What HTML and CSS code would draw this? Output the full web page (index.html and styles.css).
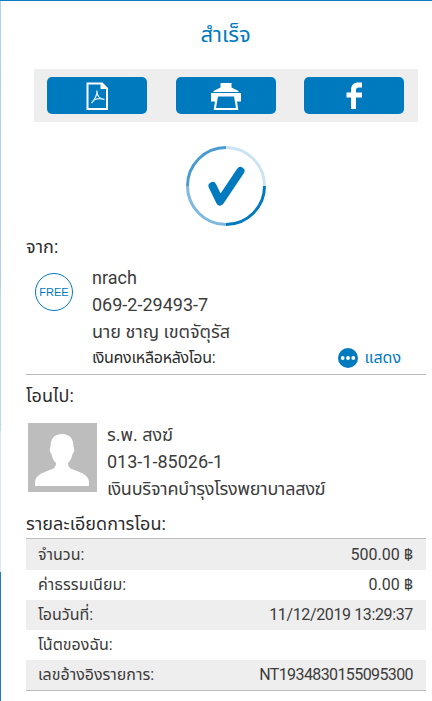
FILE: index.html
```
<!DOCTYPE html>
<html lang="th">
<head>
    <meta charset="UTF-8">
    <meta name="viewport" content="width=device-width, initial-scale=1.0">
    <title>สำเร็จ</title>
    <link rel="stylesheet" href="styles.css">
</head>
<body>
    <main class="page">
        <h1>สำเร็จ</h1>

        <div class="actions">
            <button class="btn" aria-label="PDF">
                <svg width="24" height="30" viewBox="0 0 24 30">
                    <path d="M1.500 1.500h16l5.500 5.500v22H1.500z" fill="#fff"/>
                    <path d="M3.500 3.500h12v4.500h5.500v19H3.500z" fill="#007abf"/>
                    <path d="M12 9.500c0 6-2 9-5.500 12.500M12 10c0 5 3 8 7.500 8.500M8 19.500c4-2.500 7-2.500 11-1" fill="none" stroke="#d5ebf8" stroke-width="1.300"/>
                </svg>
            </button>
            <button class="btn" aria-label="Print">
                <svg width="30" height="30" viewBox="0 0 30 30">
                    <path d="M9.500 2h11v4.500l7 3.500v1h-25v-1l7-3.500z" fill="#fff"/>
                    <path d="M0 12h30v8.500h-4l1.300 8.500H2.700L4 20.500H0z" fill="#fff"/>
                    <path d="M7 15.500h16l2 11.500H5z" fill="#007abf"/>
                </svg>
            </button>
            <button class="btn" aria-label="Facebook">
                <svg width="18" height="30" viewBox="0 0 18 30">
                    <path d="M6 28V16.500H1.500V11.500H6V9c0-5 3-7.500 7-7.500h4v5h-3c-2 0-3 1-3 2.500v2.500h6v5h-6V28z" fill="#fff"/>
                </svg>
            </button>
        </div>

        <svg class="done" width="80" height="80" viewBox="0 0 80 80" fill="none">
            <path d="M40 1.500A38.500 38.500 0 0 1 78.500 40" stroke="#cce3f3" stroke-width="3"/>
            <path d="M78.500 40A38.500 38.500 0 0 1 40 78.500" stroke="#007abf" stroke-width="3"/>
            <path d="M40 78.500A38.500 38.500 0 0 1 1.500 40" stroke="#80b9df" stroke-width="3"/>
            <path d="M1.500 40A38.500 38.500 0 0 1 40 1.500" stroke="#4a9bd0" stroke-width="3"/>
            <path d="M26.500 40L34 55.500L54.500 25" stroke="#007abf" stroke-width="8" stroke-linecap="round" stroke-linejoin="round"/>
        </svg>

        <h2>จาก:</h2>
        <section class="account sender">
            <div class="free">FREE</div>
            <div class="lines">
                <p>nrach</p>
                <p>069-2-29493-7</p>
                <p>นาย ชาญ เขตจัตุรัส</p>
                <p class="balance">
                    <span class="balance-label">เงินคงเหลือหลังโอน:</span>
                    <a class="show">
                        <svg width="20" height="20" viewBox="0 0 20 20">
                            <circle cx="10" cy="10" r="10" fill="#007abf"/>
                            <g fill="#fff">
                                <circle cx="4.700" cy="10" r="1.900"/>
                                <circle cx="10" cy="10" r="1.900"/>
                                <circle cx="15.300" cy="10" r="1.900"/>
                            </g>
                        </svg>
                        <span>แสดง</span>
                    </a>
                </p>
            </div>
        </section>

        <h2 class="to">โอนไป:</h2>
        <section class="account receiver">
            <svg class="avatar" width="69" height="69" viewBox="0 0 69 69">
                <path d="M0 0h69v69H0z" fill="#bdbdbd"/>
                <path d="M34 11c8 0 11.500 5 11.500 13 1.500 2 1 5-1 7-1 5-2.500 7-4.500 9 0 5 3 6 9 8 8 3 12 6 12 12v3H7v-3c0-6 4-9 12-12 6-2 9-3 9-8-2-2-3.500-4-4.500-9-2-2-2.500-5-1-7 0-8 3.500-13 11.500-13z" fill="#fff"/>
            </svg>
            <div class="lines">
                <p>ร.พ. สงฆ์</p>
                <p>013-1-85026-1</p>
                <p class="fund">เงินบริจาคบำรุงโรงพยาบาลสงฆ์</p>
            </div>
        </section>

        <h2 class="details-title">รายละเอียดการโอน:</h2>
        <dl class="details">
            <div><dt>จำนวน:</dt><dd>500.00 ฿</dd></div>
            <div><dt>ค่าธรรมเนียม:</dt><dd>0.00 ฿</dd></div>
            <div><dt>โอนวันที่:</dt><dd class="date">11/12/2019 13:29:37</dd></div>
            <div><dt>โน้ตของฉัน:</dt><dd></dd></div>
            <div><dt>เลขอ้างอิงรายการ:</dt><dd class="ref">NT1934830155095300</dd></div>
        </dl>
    </main>
</body>
</html>
```
FILE: styles.css
```
* {
    box-sizing: border-box;
}

body {
    margin: 0;
    background: #fff;
    color: #3c3c3c;
    font-family: Roboto, "Noto Sans Thai", "Noto Sans", sans-serif;
    font-size: 18px;
}

h1, h2, p, dl, dd {
    margin: 0;
    font-weight: 400;
    white-space: nowrap;
}

.page {
    height: 701px;
    padding: 0 6px 0 25px;
    border-top: 1px solid #007abf;
    border-left: 1px solid;
    border-image: linear-gradient(#0b7dc0 1px, #add3f0 1px, #b4cfe0 289px, #b8d8e4 289px, #b8d8e4 430px, #dae7f2 430px, #dae7f2 571px, #1f7cb8 571px) 1;
}

h1 {
    height: 68px;
    padding-right: 1px;
    font-size: 22px;
    line-height: 68px;
    color: #007abf;
    text-align: center;
}

.actions {
    display: flex;
    justify-content: space-between;
    width: 384px;
    height: 53px;
    margin-left: 8px;
    padding: 8px 14px 8px 13px;
    background: #eee;
}

.btn {
    display: flex;
    align-items: center;
    justify-content: center;
    width: 100px;
    height: 37px;
    padding: 0;
    border: 0;
    border-radius: 5px;
    background: #007abf;
}

.done {
    display: block;
    margin: 24px auto 0;
}

h2 {
    height: 38px;
    color: #2c2c2c;
    font-size: 18px;
    letter-spacing: 0.1px;
    line-height: 42px;
}

.account {
    display: flex;
}

.lines p {
    height: 27px;
    line-height: 27px;
}

.sender {
    height: 111px;
    border-bottom: 1px solid #bbb;
}

.free {
    display: flex;
    align-items: center;
    justify-content: center;
    width: 38px;
    height: 38px;
    margin: 9px 19px 0 9px;
    border: 1px solid #007abf;
    border-radius: 50%;
    color: #007abf;
    font-family: "Liberation Sans", sans-serif;
    font-size: 11px;
}

.lines .balance {
    display: flex;
    justify-content: space-between;
    width: 309px;
    height: 25px;
    line-height: 25px;
    font-size: 16px;
}

.balance-label {
    color: #2c2c2c;
    letter-spacing: -0.3px;
}

.show {
    display: flex;
    align-items: center;
    gap: 6px;
    color: #007abf;
}

.to {
    height: 47px;
    line-height: 42px;
}

.avatar {
    margin: 1px 10px 0 2px;
}

.receiver {
    height: 82px;
}

.receiver .lines {
    margin-top: -1px;
}

.fund {
    letter-spacing: -0.2px;
}

.details-title {
    height: 34px;
    line-height: 40px;
}

.details {
    border-top: 1px solid #bbb;
    border-bottom: 1px solid #bbb;
    font-size: 16px;
}

.details div {
    display: flex;
    justify-content: space-between;
    height: 30px;
    padding: 0 13px 0 12px;
    line-height: 30px;
}

.details div:nth-child(odd) {
    background: #eee;
}

.details div:first-child {
    height: 31px;
    line-height: 32px;
}

.details .date {
    letter-spacing: -0.37px;
}

.details .ref {
    letter-spacing: -0.6px;
}
```
